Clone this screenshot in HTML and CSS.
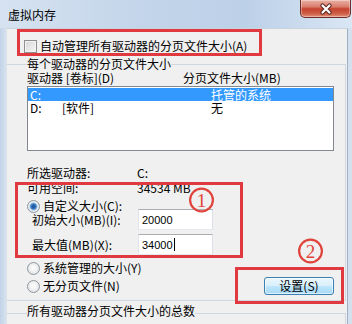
FILE: index.html
```html
<!DOCTYPE html>
<html>
<head>
<meta charset="utf-8">
<link rel="stylesheet" href="styles.css">
</head>
<body>
<div class="window">
  <div class="titlebar">
    <span class="title">虚拟内存</span>
    <span class="close">
      <svg width="16" height="12" viewBox="0 0 16 12"><path d="M4.5 2.5 L11.5 9.5 M11.5 2.5 L4.5 9.5" stroke="#5a2620" stroke-width="4.2" stroke-linecap="round"/><path d="M4.5 2.5 L11.5 9.5 M11.5 2.5 L4.5 9.5" stroke="#fff" stroke-width="2.2" stroke-linecap="round"/></svg>
    </span>
  </div>
  <div class="frame">
    <div class="client">
      <div class="check-row"><span class="checkbox"></span><span>自动管理所有驱动器的分页文件大小(A)</span></div>
      <div class="group g1">
        <div class="legend">每个驱动器的分页文件大小</div>
        <div class="header"><span class="col1">驱动器 [卷标](D)</span><span>分页文件大小(MB)</span></div>
        <div class="list">
          <div class="item sel"><span class="drive">C:</span><span class="vol"></span><span>托管的系统</span></div>
          <div class="item"><span class="drive">D:</span><span class="vol">[软件]</span><span>无</span></div>
        </div>
        <div class="info first"><span class="k">所选驱动器:</span><span>C:</span></div>
        <div class="info"><span class="k">可用空间:</span><span>34534 MB</span></div>
        <div class="radio-row custom"><span class="radio on"></span><span>自定义大小(C):</span></div>
        <div class="field"><span class="flabel">初始大小(MB)(I):</span><span class="input">20000</span></div>
        <div class="field second"><span class="flabel">最大值(MB)(X):</span><span class="input">34000<span class="caret"></span></span></div>
        <div class="radio-row sys"><span class="radio"></span><span>系统管理的大小(Y)</span></div>
        <div class="last-row">
          <div class="radio-row"><span class="radio"></span><span>无分页文件(N)</span></div>
          <span class="btn">设置(S)</span>
        </div>
      </div>
      <div class="group g2"><div class="legend">所有驱动器分页文件大小的总数</div></div>
    </div>
  </div>

  <div class="mark m1"></div>
  <div class="mark m2"></div>
  <div class="mark m3"></div>
  <svg class="num n1" viewBox="0 0 27 26"><circle cx="13.5" cy="13" r="11.4" fill="none" stroke="#e0433b" stroke-width="2.2"/><text x="13.5" y="19.5" text-anchor="middle" font-family="Liberation Serif" font-size="19" fill="#e0433b">1</text></svg>
  <svg class="num n2" viewBox="0 0 27 26"><circle cx="13.5" cy="13" r="11.4" fill="none" stroke="#e0433b" stroke-width="2.2"/><text x="13.5" y="19.5" text-anchor="middle" font-family="Liberation Serif" font-size="19" fill="#e0433b">2</text></svg>
</div>
</body>
</html>
```

FILE: styles.css
```css
html, body {
  margin: 0;
  padding: 0;
}
body {
  font-family: "Noto Sans CJK SC", "Noto Sans", sans-serif;
  font-size: 12px;
  color: #000;
}
.window {
  position: relative;
  width: 352px;
  height: 324px;
  overflow: hidden;
  display: flex;
  flex-direction: column;
  background: #cad9eb;
}
.titlebar {
  height: 28px;
  flex: none;
  display: flex;
  align-items: flex-start;
  background: linear-gradient(90deg, #d6e2f0 0%, #c3d5ea 40%, #bcd0e8 70%, #d9e6f4 100%);
}
.title {
  padding: 8px 0 0 8px;
  line-height: 14px;
}
.close {
  margin-left: auto;
  margin-right: 1px;
  width: 51px;
  height: 18px;
  box-sizing: border-box;
  border: 1px solid #6e2e27;
  border-top: none;
  border-radius: 0 0 5px 5px;
  background: linear-gradient(#eab0a3 0%, #d97d6c 40%, #c5432f 52%, #cf5f48 80%, #e2917a 100%);
  box-shadow: inset 0 0 0 1px rgba(255, 255, 255, 0.35);
  display: flex;
  align-items: center;
  justify-content: center;
}
.frame {
  flex: 1;
  display: flex;
  padding: 0 15px 0 6px;
  background: linear-gradient(90deg, #c3d3e6 0, #d5e1ef 6px, transparent 6px, transparent 345px, #a8bad0 345px, #a8bad0 346px, #d4e0ee 346px);
}
.client {
  flex: 1;
  background: #f0f0f0;
  border-left: 1px solid #dde2e8;
  border-right: 1px solid #9fb1c6;
  border-top: 1px solid #c9d2dd;
  display: flex;
  flex-direction: column;
}
.check-row {
  margin-top: 9px;
  height: 16px;
  line-height: 16px;
  display: flex;
  align-items: center;
  gap: 3px;
  padding-left: 17px;
}
.checkbox {
  width: 13px;
  height: 13px;
  box-sizing: border-box;
  border: 1px solid #8f8f8f;
  background: linear-gradient(135deg, #d6d6d6, #f7f7f7);
  box-shadow: inset 0 0 0 1px #f2f2f2;
}
.group {
  border: 1px solid #d0d7de;
  border-left: none;
  margin-right: 1px;
}
.g1 {
  margin-top: 10px;
  padding: 0 11px 5px 0;
}
.g2 {
  margin-top: 12px;
  min-height: 40px;
}
.legend {
  width: fit-content;
  margin: -8px 0 0 20px;
  line-height: 14px;
  background: #f0f0f0;
}
.g2 .legend {
  margin-top: -10px;
}
.header {
  display: flex;
  line-height: 14px;
  padding-left: 20px;
}
.col1 {
  width: 156px;
}
.list {
  margin: 1px 0 0 20px;
  width: 307px;
  height: 65px;
  box-sizing: border-box;
  border: 1px solid #828790;
  background: #fff;
  padding-top: 1px;
}
.item {
  height: 13px;
  line-height: 13px;
  display: flex;
  padding-left: 2px;
}
.item.sel {
  background: #3399ff;
  color: #fff;
}
.drive {
  width: 32px;
}
.vol {
  width: 149px;
}
.info {
  display: flex;
  padding-left: 20px;
  line-height: 15px;
}
.info.first {
  margin-top: 14px;
}
.k {
  width: 110px;
}
.radio-row {
  display: flex;
  align-items: center;
  gap: 3px;
  padding-left: 20px;
  line-height: 14px;
  height: 14px;
}
.radio-row.custom {
  margin-top: 4px;
  margin-bottom: -4px;
}
.radio-row.sys {
  margin-top: 6px;
}
.radio {
  width: 13px;
  height: 13px;
  box-sizing: border-box;
  border-radius: 50%;
  border: 1px solid #8e969f;
  background: radial-gradient(circle at 50% 45%, #ffffff 0%, #f2f2f2 40%, #d6d9dd 100%);
}
.radio.on {
  background: radial-gradient(circle at 50% 50%, #1f4f8c 0, #2d6cb5 2px, #6fa6dc 3.3px, #e9edf2 4.3px, #dde1e6 100%);
}
.field {
  display: flex;
  align-items: center;
  height: 21px;
  padding-left: 25px;
}
.field.second {
  margin-top: 4px;
}
.flabel {
  width: 106px;
}
.input {
  width: 75px;
  height: 21px;
  box-sizing: border-box;
  border: 1px solid #abadb3;
  border-color: #abadb3 #dbdfe6 #e3e9ef #e2e3ea;
  background: #fff;
  font-family: "Liberation Sans", sans-serif;
  font-size: 11px;
  padding-left: 3px;
  display: flex;
  align-items: center;
}
.caret {
  width: 1px;
  height: 13px;
  background: #000;
  margin-left: 1px;
}
.last-row {
  display: flex;
  align-items: center;
  justify-content: space-between;
  height: 18px;
  margin-top: 2px;
}
.btn {
  width: 70px;
  height: 18px;
  box-sizing: border-box;
  border: 1px solid #3c7fb1;
  border-radius: 3px;
  background: linear-gradient(#eaf6fd 0%, #d9f0fc 48%, #bee6fd 52%, #a7d9f5 100%);
  box-shadow: inset 0 0 0 1px rgba(255, 255, 255, 0.6);
  display: flex;
  align-items: center;
  justify-content: center;
  line-height: 14px;
}
.mark {
  position: absolute;
  box-sizing: border-box;
  border: 3px solid #e0393f;
}
.m1 {
  left: 17px;
  top: 29px;
  width: 245px;
  height: 27px;
}
.m2 {
  left: 15px;
  top: 182px;
  width: 228px;
  height: 76px;
}
.m3 {
  left: 235px;
  top: 267px;
  width: 109px;
  height: 37px;
}
.num {
  position: absolute;
  width: 27px;
  height: 26px;
}
.n1 {
  left: 188px;
  top: 187px;
}
.n2 {
  left: 297px;
  top: 238px;
}
```
